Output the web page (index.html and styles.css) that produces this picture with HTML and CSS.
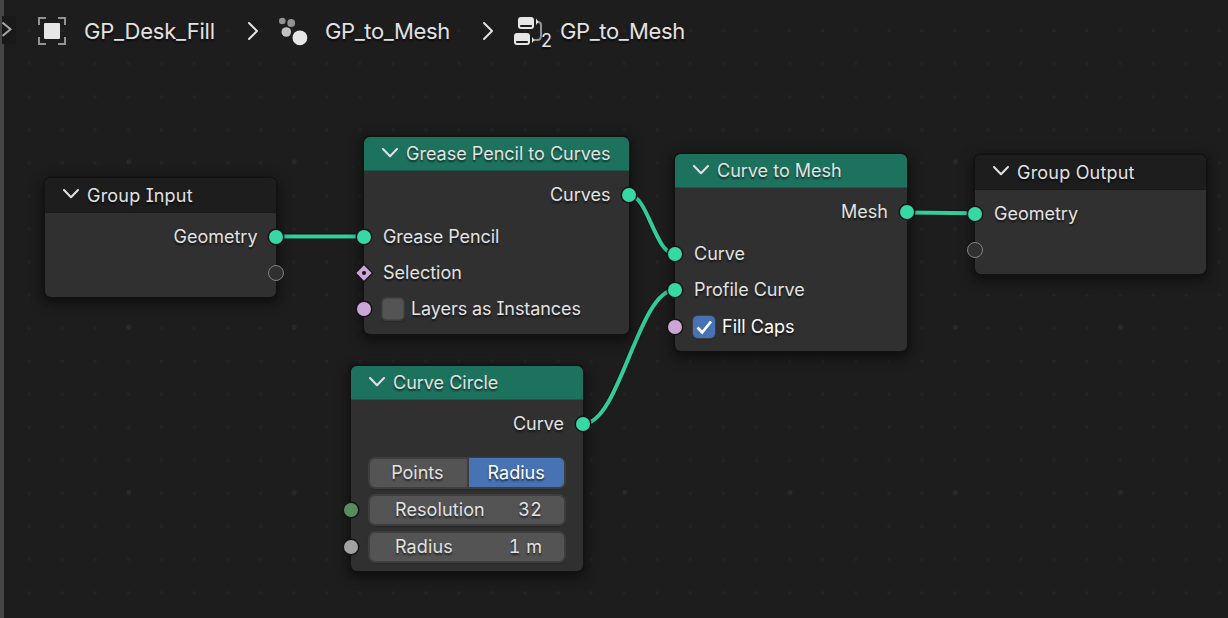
FILE: index.html
```html
<!DOCTYPE html>
<html lang="en">
<head>
<meta charset="utf-8">
<title>Geometry Nodes</title>
<link rel="stylesheet" href="styles.css">
</head>
<body>
<main class="editor">
  <svg class="grid" width="1228" height="618">
    <defs>
      <pattern id="minor" x="12.67" y="14.1" width="33.06" height="33.06" patternUnits="userSpaceOnUse"><circle class="dot" cx="16.53" cy="16.53" r="1.6"/></pattern>
      <pattern id="major" x="46.35" y="79.15" width="165.3" height="165.3" patternUnits="userSpaceOnUse"><circle class="dot-major" cx="82.65" cy="82.65" r="2.4"/></pattern>
    </defs>
    <rect width="1228" height="618" fill="url(#minor)"/>
    <rect y="80" width="1228" height="538" fill="url(#major)"/>
  </svg>

  <header class="breadcrumbs">
    <svg class="ico-object" width="28" height="28" viewBox="0 0 28 28"><path class="frame" d="M1 8V1h7M20 1h7v7M27 20v7h-7M8 27H1v-7"/><rect class="lit" x="6" y="6" width="16" height="16" rx="1"/></svg>
    <span class="crumb crumb-object">GP_Desk_Fill</span>
    <svg class="sep sep-a" width="12" height="20"><path d="M2 2l8 8-8 8"/></svg>
    <svg class="ico-modifier" width="29" height="29"><circle cx="3.300" cy="4" r="3.3" fill="#929292"/><circle cx="12.200" cy="6" r="3.9" fill="#929292"/><circle cx="7.300" cy="15" r="4.8" fill="#c0c0c0"/><circle class="lit" cx="20.900" cy="20.8" r="7.4"/></svg>
    <span class="crumb crumb-modifier">GP_to_Mesh</span>
    <svg class="sep sep-b" width="12" height="20"><path d="M2 2l8 8-8 8"/></svg>
    <span class="ico-tree">
      <svg width="30" height="30"><path class="wire" d="M22 5h2q3 0 3 3v11q0 4-4 4h-3"/><rect class="lit" x="4" y="0" width="16" height="12" rx="3"/><rect class="slot" x="6" y="8" width="12" height="2" rx=".7"/><rect class="lit" x="0" y="16" width="16" height="12" rx="3"/><rect class="slot" x="2" y="24" width="12" height="2" rx=".7"/><path class="lit" d="M22 1.500l2.500 3.300-2.500 3.200zM18 20l2.500 3-2.500 3z"/></svg>
      <span class="users">2</span>
    </span>
    <span class="crumb">GP_to_Mesh</span>
  </header>

  <div class="region-edge"></div>
  <div class="region-tab"><svg width="12" height="18"><path d="M0.500 2.500l8 6.700-8 6.700"/></svg></div>

  <svg class="links" width="1228" height="618">
    <g class="link-outline"><path d="M276 236.5H364"/><path d="M629 195C648 195 655 254 675 254"/><path d="M583 424C620 424 638 290 675 290"/><path d="M907 212.4L975 213.3"/></g>
    <g class="link"><path d="M276 236.5H364"/><path d="M629 195C648 195 655 254 675 254"/><path d="M583 424C620 424 638 290 675 290"/><path d="M907 212.4L975 213.3"/></g>
  </svg>

  <section class="node plain group-input">
    <h2><svg class="chev" width="16" height="10"><path d="M1 1l7 7.3L15 1"/></svg>Group Input</h2>
    <div class="row out">Geometry<i class="socket geo"></i></div>
    <div class="row out"><i class="socket virtual"></i></div>
  </section>

  <section class="node to-curves">
    <h2><svg class="chev" width="16" height="10"><path d="M1 1l7 7.3L15 1"/></svg>Grease Pencil to Curves</h2>
    <div class="row out">Curves<i class="socket geo"></i></div>
    <div class="inputs">
      <div class="row tight">Grease Pencil<i class="socket geo"></i></div>
      <div class="row">Selection<svg class="socket-field" width="20" height="20"><path d="M10 1.400L18.600 10 10 18.600 1.400 10z"/><circle cx="10" cy="10" r="2"/></svg></div>
      <div class="row tight"><span class="check"></span>Layers as Instances<i class="socket bool"></i></div>
    </div>
  </section>

  <section class="node curve-circle">
    <h2><svg class="chev" width="16" height="10"><path d="M1 1l7 7.3L15 1"/></svg>Curve Circle</h2>
    <div class="row out">Curve<i class="socket geo"></i></div>
    <div class="fields">
      <div class="tabs"><span>Points</span><span class="active">Radius</span></div>
      <div class="field"><span>Resolution</span><span class="num">32</span><i class="socket int"></i></div>
      <div class="field"><span>Radius</span><span class="num">1 m</span><i class="socket float"></i></div>
    </div>
  </section>

  <section class="node curve-to-mesh">
    <h2><svg class="chev" width="16" height="10"><path d="M1 1l7 7.3L15 1"/></svg>Curve to Mesh</h2>
    <div class="row out">Mesh<i class="socket geo"></i></div>
    <div class="inputs">
      <div class="row">Curve<i class="socket geo"></i></div>
      <div class="row">Profile Curve<i class="socket geo"></i></div>
      <div class="row on"><span class="check checked"><svg width="20" height="20"><path d="M3.5 10.5l4.7 5L17 4.5"/></svg></span>Fill Caps<i class="socket bool"></i></div>
    </div>
  </section>

  <section class="node plain group-output">
    <h2><svg class="chev" width="16" height="10"><path d="M1 1l7 7.3L15 1"/></svg>Group Output</h2>
    <div class="row">Geometry<i class="socket geo"></i></div>
    <div class="row"><i class="socket virtual"></i></div>
  </section>
</main>
</body>
</html>
```

FILE: styles.css
```css
* { box-sizing: border-box; }
body { margin: 0; background: #1d1d1d; }
.editor {
  position: relative;
  width: 1228px;
  height: 618px;
  overflow: hidden;
  background: #1d1d1d;
  color: #e2e2e2;
  font: 400 18px/24px Inter, "Liberation Sans", sans-serif;
  font-feature-settings: "cv08";
  text-shadow: 0 2px 2px rgba(0, 0, 0, .6);
}
svg { display: block; flex: none; }
.grid, .links { position: absolute; left: 0; top: 0; }
.dot { fill: #242424; }
.dot-major { fill: #292929; }
.lit { fill: #e6e6e6; }

.breadcrumbs {
  position: relative;
  display: flex;
  align-items: center;
  height: 62px;
  padding-left: 38px;
  font-size: 22px;
  letter-spacing: -.4px;
}
.frame { fill: none; stroke: #929292; stroke-width: 2; }
.crumb { white-space: nowrap; }
.crumb-object { width: 131px; margin-left: 18px; letter-spacing: -.22px; }
.sep path { fill: none; stroke: #e2e2e2; stroke-width: 2; stroke-linecap: round; stroke-linejoin: round; }
.sep-a { margin: 0 20px 0 32px; }
.ico-modifier { margin-right: 17px; }
.crumb-modifier { width: 125px; }
.sep-b { margin: 0 20px 0 32px; }
.ico-tree { position: relative; width: 46px; height: 29px; }
.ico-tree .wire { fill: none; stroke: #929292; stroke-width: 2; }
.ico-tree .slot { fill: #1d1d1d; }
.users { position: absolute; left: 27px; top: 12px; font-size: 18px; }

.region-edge { position: absolute; left: 0; top: 0; width: 4px; height: 618px; background: #464646; }
.region-tab { position: absolute; left: 2px; top: 16px; width: 14px; height: 28px; padding-top: 4px; background: #191919; border-radius: 0 4px 4px 0; }
.region-tab path { fill: none; stroke: #a5a5a5; stroke-width: 2; }

.link-outline { fill: none; stroke: #151515; stroke-width: 6; }
.link { fill: none; stroke: #33cc9b; stroke-width: 4; }

.node {
  position: absolute;
  background: #303030;
  border-radius: 6px;
  box-shadow: 0 0 0 1.5px #121212, 0 4px 12px 3px rgba(0, 0, 0, .5);
}
.node h2 {
  display: flex;
  align-items: center;
  gap: 8.5px;
  height: 34px;
  margin: 0 0 7px;
  padding: 0 0 0 17.5px;
  background: #1d725e;
  border-bottom: 1.5px solid #1e5648;
  border-radius: 6px 6px 0 0;
  font: inherit;
  line-height: 23px;
}
.plain h2 { height: 35px; background: #1d1d1d; border-color: #191919; letter-spacing: .2px; }
.chev { margin-bottom: 1.5px; }
.chev path { fill: none; stroke: #e2e2e2; stroke-width: 2; stroke-linecap: round; stroke-linejoin: round; }
.group-input { left: 45px; top: 178px; width: 231px; height: 119px; }
.to-curves { left: 364px; top: 137px; width: 265px; height: 197px; }
.curve-circle { left: 351px; top: 366px; width: 231.5px; height: 205px; }
.curve-to-mesh { left: 675px; top: 154px; width: 231.5px; height: 197px; }
.group-output { left: 975px; top: 155px; width: 231px; height: 119px; }

.row { position: relative; display: flex; align-items: center; height: 36px; padding: 0 18.5px 0 19px; white-space: nowrap; }
.row.tight { letter-spacing: -.08px; }
.out { justify-content: flex-end; }
.node .out, .group-output .row { top: -1.5px; }
.inputs { margin-top: 4.5px; }
.row.on { top: 1px; color: #fff; }
.socket { position: absolute; left: -7px; top: 50%; width: 14px; height: 14px; margin-top: -7px; border-radius: 50%; box-shadow: 0 0 0 1.5px #151515; }
.out .socket { left: auto; right: -7px; }
.geo { background: #38d8a5; }
.bool { background: #cca6d6; }
.int { background: #598c5c; }
.float { background: #a1a1a1; }
.row .virtual { left: -8px; width: 16px; height: 16px; margin-top: -8px; background: #303030; border: 1.8px solid #828282; box-shadow: none; }
.row.out .virtual { left: auto; right: -8px; }
.socket-field { position: absolute; left: -10px; top: 8px; }
.socket-field path { fill: #cca6d6; stroke: #151515; stroke-width: 1.3; }
.socket-field circle { fill: #101010; }

.check { width: 22px; height: 22px; margin: 0 7px 0 -1px; background: #545454; border: 1px solid #464646; border-radius: 4px; outline: 1px solid #3c3c3c; box-shadow: 0 2px 1px #292929; }
.checked { background: #4772b3; border-color: #4772b3; }
.checked path { fill: none; stroke: #fff; stroke-width: 2.7; }

.fields { display: flex; flex-direction: column; gap: 4.5px; margin-top: 13.5px; padding: 0 17px; }
.tabs, .field { position: relative; display: flex; align-items: center; height: 32.5px; background: #545454; border: 2px solid #3e3e3e; border-radius: 7px; box-shadow: 0 1px 1px #292929; }
.tabs span { flex: 1; height: 29px; line-height: 30px; text-align: center; }
.tabs span:first-child { padding-right: 2px; }
.tabs .active { background: #4772b3; border-left: 2px solid #3e3e3e; border-radius: 0 5px 5px 0; color: #fff; }
.field { justify-content: space-between; padding: 0 21px 0 25px; letter-spacing: .1px; }
.field .socket { left: -26px; }
.num { font-feature-settings: "tnum"; letter-spacing: .5px; }
```
